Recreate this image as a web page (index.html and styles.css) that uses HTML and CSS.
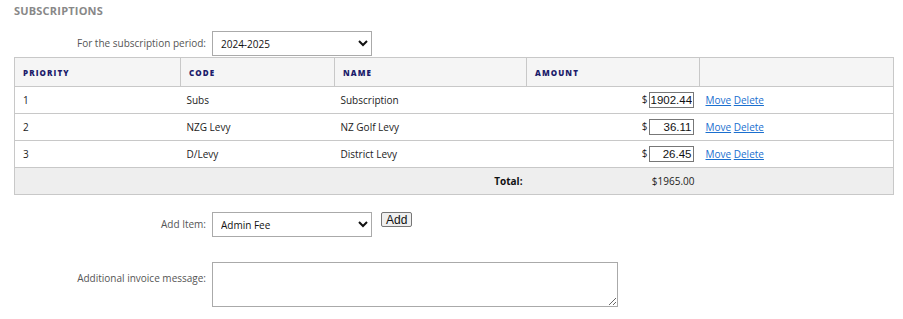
FILE: index.html
```html
<!DOCTYPE html>
<html>
<head>
	<meta charset="utf-8">
	<title>Subscriptions</title>
	<link rel="stylesheet" href="styles.css">
</head>
<body>

	<h3 class="section-title">SUBSCRIPTIONS</h3>

	<div class="form-row period-row">
		<label class="form-label">For the subscription period:</label>
		<select class="wide-select">
			<option>2024-2025</option>
		</select>
	</div>

	<table class="subs">
		<colgroup>
			<col style="width:166px">
			<col style="width:154px">
			<col style="width:192px">
			<col style="width:173px">
			<col>
		</colgroup>
		<thead>
			<tr>
				<th>PRIORITY</th>
				<th>CODE</th>
				<th>NAME</th>
				<th>AMOUNT</th>
				<th></th>
			</tr>
		</thead>
		<tbody>
			<tr>
				<td class="prio">1</td>
				<td>Subs</td>
				<td>Subscription</td>
				<td class="amount">$<input type="text" class="amount-input" value="1902.44"></td>
				<td class="actions"><a href="#">Move</a> <a href="#">Delete</a></td>
			</tr>
			<tr>
				<td class="prio">2</td>
				<td>NZG Levy</td>
				<td>NZ Golf Levy</td>
				<td class="amount">$<input type="text" class="amount-input" value="36.11"></td>
				<td class="actions"><a href="#">Move</a> <a href="#">Delete</a></td>
			</tr>
			<tr>
				<td class="prio">3</td>
				<td>D/Levy</td>
				<td>District Levy</td>
				<td class="amount">$<input type="text" class="amount-input" value="26.45"></td>
				<td class="actions"><a href="#">Move</a> <a href="#">Delete</a></td>
			</tr>
			<tr class="total-row">
				<td colspan="3" class="total-label">Total:</td>
				<td class="total-amount">$1965.00</td>
				<td></td>
			</tr>
		</tbody>
	</table>

	<div class="form-row add-row">
		<label class="form-label">Add Item:</label>
		<select class="wide-select">
			<option>Admin Fee</option>
		</select>
		<button class="add-btn">Add</button>
	</div>

	<div class="form-row message-row">
		<label class="form-label">Additional invoice message:</label>
		<textarea class="message"></textarea>
	</div>

</body>
</html>
```

FILE: styles.css
```css
body {
	font-family: "Open Sans", Arial, sans-serif;
	font-size: 10px;
	color: #222;
	margin: 0;
	padding: 0 10px 0 14px;
}
.section-title {
	margin: 0;
	padding-top: 3px;
	font-size: 11px;
	font-weight: 700;
	letter-spacing: 0.2px;
	color: #888;
	height: 28px;
}
.form-row {
	display: flex;
	align-items: center;
}
.form-label {
	width: 192px;
	text-align: right;
	color: #555;
	margin-right: 6px;
}
.period-row {
	height: 26px;
	align-items: flex-start;
}
.period-row .form-label {
	line-height: 25px;
}
.wide-select {
	width: 160px;
	height: 25px;
	border: 1px solid #aaa;
	background: #fff;
	font-family: "Open Sans", Arial, sans-serif;
	font-size: 10px;
	color: #111;
	padding: 0 4px;
	border-radius: 0;
}
.subs {
	width: 880px;
	table-layout: fixed;
	border-collapse: collapse;
	border: 1px solid #c8c8c8;
}
.subs th {
	background: #f5f5f5;
	height: 28px;
	text-align: left;
	padding: 0 8px;
	font-size: 8px;
	font-weight: 800;
	letter-spacing: 1.1px;
	color: #1c1c6b;
	border: 1px solid #c8c8c8;
}
.subs td {
	height: 26px;
	padding: 0 6px;
	border-top: 1px solid #c8c8c8;
	white-space: nowrap;
}
.subs td.prio {
	padding-left: 8px;
}
.subs td.amount {
	text-align: right;
}
.amount-input {
	width: 45px;
	height: 16px;
	box-sizing: border-box;
	margin: 0 0 0 1px;
	padding: 0 1px;
	border: 1px solid #777;
	font-family: "Liberation Sans", Arial, sans-serif;
	font-size: 11.5px;
	text-align: right;
	color: #111;
	vertical-align: middle;
}
.actions {
	padding-left: 6px;
}
.actions a {
	color: #1a6fcf;
}
.total-row td {
	background: #eee;
}
.total-label {
	text-align: right;
	font-weight: 700;
	color: #111;
}
.subs td.total-label {
	padding-right: 4px;
}
.subs td.total-amount {
	text-align: right;
	padding-right: 5px;
}
.add-row {
	margin-top: 17px;
	align-items: flex-start;
}
.add-row .form-label {
	line-height: 25px;
}
.add-btn {
	margin-left: 9px;
	height: 15px;
	padding: 0 4px;
	font-family: "Liberation Sans", Arial, sans-serif;
	font-size: 12px;
	line-height: 12px;
	background: #efefef;
	border: 1px solid #767676;
	border-radius: 2px;
	color: #111;
}
.message-row {
	margin-top: 25px;
	align-items: flex-start;
}
.message-row .form-label {
	padding-top: 9px;
}
.message {
	width: 406px;
	height: 45px;
	box-sizing: border-box;
	border: 1px solid #aaa;
	margin: 0;
}
```
